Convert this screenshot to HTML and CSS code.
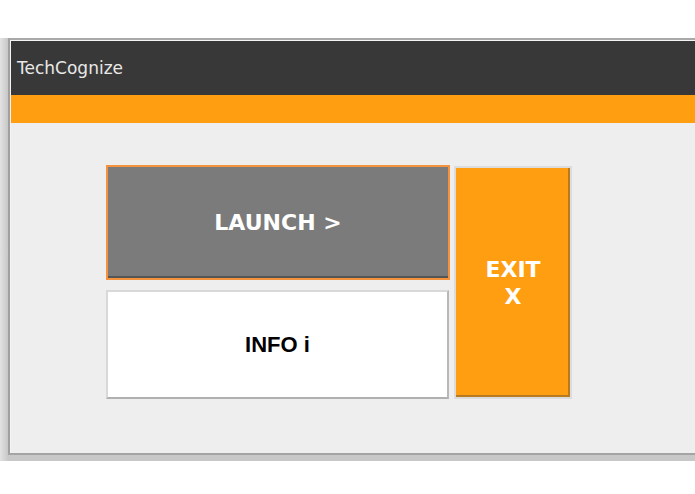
FILE: index.html
```html
<!DOCTYPE html>
<html>
<head>
<meta charset="utf-8">
<link rel="stylesheet" href="styles.css">
</head>
<body>
<div class="frame">
  <div class="window">
    <div class="titlebar"><span class="title">TechCognize</span></div>
    <div class="accent"></div>
    <div class="content">
      <div class="grid">
        <button class="btn launch">LAUNCH &gt;</button>
        <button class="btn exit">EXIT<br>X</button>
        <button class="btn info">INFO i</button>
      </div>
    </div>
  </div>
</div>
</body>
</html>
```
FILE: styles.css
```css
html, body {
  margin: 0;
  padding: 0;
  background: #ffffff;
}
.frame {
  margin-top: 38px;
  padding: 0 0 6px 8px;
  background: linear-gradient(to right, #e2e2e2 0, #c8c8c8 8px);
  box-shadow: 0 2px 3px rgba(0,0,0,0.15);
}
.window {
  border-top: 2px solid #a9a9a9;
  border-left: 2px solid #a0a0a0;
  border-bottom: 2px solid #a4a4a4;
  padding-top: 1px;
  padding-left: 1px;
  background: #f4f4f4;
}
.titlebar {
  height: 54px;
  background: #383838;
  display: flex;
  align-items: center;
  padding-left: 6px;
}
.title {
  font-family: "DejaVu Sans", sans-serif;
  font-size: 17px;
  color: #e8e8e8;
  margin-top: 0;
}
.accent {
  height: 28px;
  background: #ff9e10;
}
.content {
  background: #eeeeee;
  height: 330px;
  padding: 42px 0 0 95px;
  box-sizing: border-box;
}
.grid {
  display: grid;
  grid-template-columns: 344px 118px;
  grid-template-rows: 115px 109px;
  column-gap: 4px;
  row-gap: 10px;
}
.btn {
  margin: 0;
  font-weight: bold;
  cursor: pointer;
  box-sizing: border-box;
}
.launch {
  grid-column: 1;
  grid-row: 1;
  background: #7b7b7b;
  border: 2px solid #f4923e;
  box-shadow: inset 0 -2px 0 #555;
  color: #ffffff;
  font-family: "DejaVu Sans", sans-serif;
  font-size: 22px;
}
.info {
  grid-column: 1;
  grid-row: 2;
  margin-right: 1px;
  background: #ffffff;
  border: 2px solid #d8d8d8;
  border-right-color: #b8b8b8;
  border-bottom-color: #b0b0b0;
  color: #000000;
  font-family: "Liberation Sans", sans-serif;
  font-size: 22px;
}
.exit {
  grid-column: 2;
  grid-row: 1 / span 2;
  margin-top: 1px;
  margin-bottom: 0;
  background: #ff9e10;
  border: 2px solid #dcdcdc;
  box-shadow: inset -2px -2px 0 #b87a20;
  color: #ffffff;
  font-family: "DejaVu Sans", sans-serif;
  font-size: 22px;
  line-height: 27px;
}
```
